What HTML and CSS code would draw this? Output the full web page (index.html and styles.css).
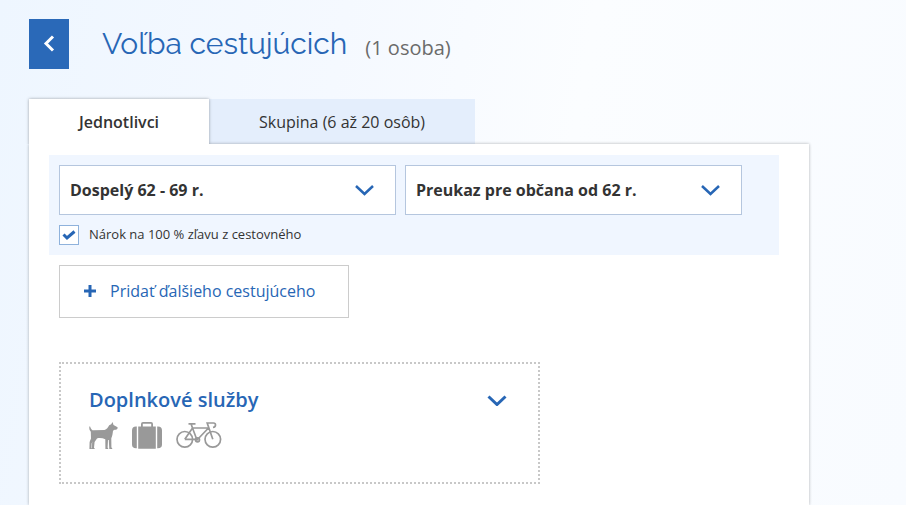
FILE: index.html
```
<!DOCTYPE html>
<html lang="sk">
<head>
	<title>Voľba cestujúcich</title>
	<meta charset="utf-8">
	<meta name="viewport" content="width=device-width, initial-scale=1">
	<link rel="stylesheet" href="styles.css">
</head>
<body>
	<main class="page">
		<header class="header">
			<button type="button" class="back" aria-label="Späť">
				<svg width="12" height="18" viewBox="0 0 12 18"><path d="M10 1.5 L3 8.5 L10 15.5"/></svg>
			</button>
			<h1>Voľba cestujúcich</h1>
			<span class="count">(1 osoba)</span>
		</header>

		<nav class="tabs">
			<button type="button" class="tab active">Jednotlivci</button>
			<button type="button" class="tab">Skupina (6 až 20 osôb)</button>
		</nav>

		<section class="panel">
			<div class="passenger">
				<div class="fields">
					<div class="select">
						<select aria-label="Vek cestujúceho">
							<option>Dospelý 62 - 69 r.</option>
						</select>
						<svg class="chevron" width="20" height="12" viewBox="0 0 20 12"><path d="M2 2 L10.5 10 L19 2"/></svg>
					</div>
					<div class="select">
						<select aria-label="Preukaz">
							<option>Preukaz pre občana od 62 r.</option>
						</select>
						<svg class="chevron" width="20" height="12" viewBox="0 0 20 12"><path d="M2 2 L10.5 10 L19 2"/></svg>
					</div>
				</div>
				<div class="discount">
					<span class="check">
						<input type="checkbox" id="free" checked>
						<svg width="14" height="12" viewBox="0 0 14 12"><path d="M1.5 5.5 L5 9 L12.5 2.5"/></svg>
					</span>
					<label for="free">Nárok na 100 % zľavu z cestovného</label>
				</div>
			</div>

			<button type="button" class="add">
				<svg width="12" height="12" viewBox="0 0 12 12"><path d="M6 0 V12 M0 6 H12"/></svg>
				Pridať ďalšieho cestujúceho
			</button>

			<section class="services">
				<div class="services-head">
					<h2>Doplnkové služby</h2>
					<svg class="chevron bold" width="20" height="12" viewBox="0 0 20 12"><path d="M1.5 2.5 L10 10.5 L18.5 2.5"/></svg>
				</div>
				<div class="icons">
					<!-- dog -->
					<svg width="29" height="28" viewBox="0 0 29 28">
						<path class="solid" d="M0.3 4.6 L1.1 4.4 C1.7 6.8 2.8 8.3 4.8 8.3 L15.5 8.1 C17.8 7.4 19 5.2 20.2 3.2 L22.2 2.2 L23.6 0 L24.5 3.1 L28.6 5.3 C28.8 7.2 27.7 7.8 25.5 7.8 L24 8.8 C23.7 11.5 23.4 14 22.3 16.3 L22.4 25.3 L23.5 27 H20.3 L19.8 18.1 L19 18.1 L18.6 25.5 L19.4 27 H16.4 L16.3 17.2 C13.6 16.2 10.5 15.7 8 16.5 L5.6 20 L5 25.8 L6 27 H3 L3.1 21 L3.6 19.2 L2.6 21.5 L2.5 25.8 L3.2 27 H0.4 L0.6 20 L2 16.5 L1.8 9.8 C0.4 8.4 0.2 6.8 0.3 4.6 Z"/>
					</svg>
					<!-- suitcase -->
					<svg width="30" height="28" viewBox="0 0 30 28">
						<path class="solid" d="M4.8 4.5 V26.3 H4 Q0 26.3 0 22.5 V8.5 Q0 4.5 4 4.5 Z M25.2 4.5 V26.3 H26 Q30 26.3 30 22.5 V8.5 Q30 4.5 26 4.5 Z"/>
						<path class="solid" d="M6.2 4.5 H9 V2 Q9 0 11 0 H19 Q21 0 21 2 V4.5 H23.8 V26.8 H6.2 Z M10.8 4.5 H19.2 V1.8 H10.8 Z" fill-rule="evenodd"/>
					</svg>
					<!-- bicycle -->
					<svg width="46" height="28" viewBox="0 0 46 28">
						<g class="line">
							<circle cx="8.8" cy="17.3" r="7.8"/>
							<circle cx="36.8" cy="17.3" r="7.8"/>
							<path d="M8.8 17.3 L16.5 6 L21 18 L32.5 6 M16.5 6 H32.5 M8.8 17.3 H20 M16.5 6 L15.2 2.2 M12.5 1.8 H19.5 M36.8 17.3 L31.2 1 H37.5 Q39.5 1 39.5 3 Q39.5 5 37 5.5"/>
							<circle cx="21.5" cy="17.8" r="2"/>
						</g>
					</svg>
				</div>
			</section>
		</section>
	</main>
</body>
</html>
```
FILE: styles.css
```
* {
	box-sizing: border-box;
}

body {
	margin: 0;
	min-height: 100vh;
	background: linear-gradient(100deg, #eef6ff 0%, #f5f9ff 35%, #fbfdff 60%, #f8fbff 100%);
	color: #333;
	font-family: "Open Sans", "Noto Sans", sans-serif;
	font-size: 16px;
}

button, select, input {
	margin: 0;
	font: inherit;
	color: inherit;
}

button {
	border: none;
	padding: 0;
	cursor: pointer;
}

h1, h2 {
	margin: 0;
	color: #2766b5;
}

svg {
	display: block;
	flex: none;
	fill: none;
	stroke: #2766b5;
	stroke-width: 3;
}

.page {
	display: flex;
	flex-direction: column;
	max-width: 838px;
	min-height: 100vh;
	padding: 19px 29px 0;
}

.header {
	display: flex;
	align-items: center;
	margin-bottom: 30px;
}

.back {
	display: flex;
	align-items: center;
	justify-content: center;
	width: 40px;
	height: 50px;
	margin-right: 33px;
	background-color: #2a69b8;
}

	.back svg {
		stroke: white;
	}

h1 {
	font-family: Raleway, Lato, sans-serif;
	font-size: 30px;
	font-weight: 400;
	line-height: 50px;
}

.count {
	margin-left: 18px;
	padding-top: 6px;
	color: #6b6b6b;
	font-size: 20px;
}

.tabs {
	display: flex;
}

.tab {
	width: 266px;
	height: 45px;
	background-color: #e4eefc;
}

	.tab.active {
		z-index: 1;
		width: 180px;
		background-color: white;
		font-weight: 600;
		box-shadow: 0 0 3px rgba(0,0,0,0.35);
		clip-path: inset(-4px -4px 0 -4px);
	}

.panel {
	flex-grow: 1;
	padding: 11px 30px 20px 20px;
	background-color: white;
	box-shadow: 0 0 3px rgba(0,0,0,0.3);
}

.passenger {
	padding: 10px;
	background-color: #f0f6ff;
}

.fields {
	display: flex;
	gap: 9px;
	margin-right: 27px;
}

/* arrow shares the grid cell with the select */
.select {
	display: grid;
	flex: 1;
	align-items: center;
}

	.select > * {
		grid-area: 1 / 1;
	}

	.select select {
		appearance: none;
		width: 100%;
		height: 50px;
		padding: 0 60px 0 10px;
		border: 1px solid #b5c6de;
		border-radius: 0;
		background-color: white;
		font-weight: 700;
	}

	.select .chevron {
		justify-self: end;
		margin-right: 22px;
		stroke-width: 2.5;
		pointer-events: none;
	}

.discount {
	display: flex;
	align-items: center;
	gap: 10px;
	margin-top: 10px;
	font-size: 13px;
	line-height: 18px;
}

	.discount label {
		padding-bottom: 2px;
	}

.check {
	display: grid;
	place-items: center;
}

	.check > * {
		grid-area: 1 / 1;
		pointer-events: none;
	}

	.check input {
		appearance: none;
		width: 20px;
		height: 20px;
		border: 1px solid #8fb2dc;
		background-color: white;
		pointer-events: auto;
	}

	.check input:not(:checked) + svg {
		visibility: hidden;
	}

.add {
	display: flex;
	align-items: center;
	gap: 14px;
	width: 290px;
	height: 53px;
	margin: 10px 0 44px 10px;
	padding: 0 0 1px 24px;
	border: 1px solid #ccc;
	background-color: white;
	color: #2766b5;
}

.services {
	max-width: 481px;
	min-height: 122px;
	margin-left: 10px;
	padding: 22px 31px 22px 28px;
	border: 2px dotted #c8c8c8;
}

.services-head {
	display: flex;
	align-items: center;
	justify-content: space-between;
}

h2 {
	font-size: 20px;
	font-weight: 600;
	line-height: 28px;
}

.icons {
	display: flex;
	gap: 14px;
	margin-top: 8px;
}

	.icons .solid {
		fill: #999;
		stroke: none;
	}

	.icons .line {
		stroke: #999;
		stroke-width: 1.7;
	}
```
